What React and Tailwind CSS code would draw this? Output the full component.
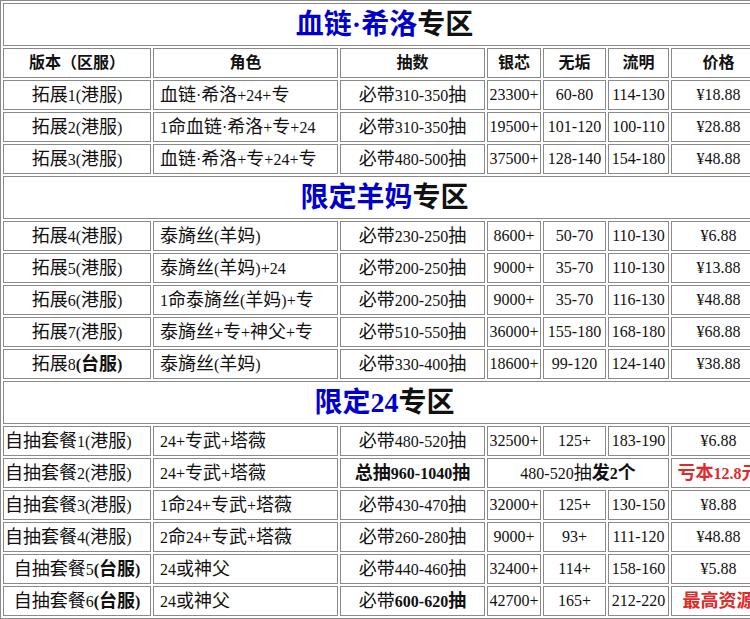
import React from 'react';

const FONT = '"Liberation Serif", "Noto Sans CJK SC", serif';

// CJK runs render a touch larger than the Latin digits in the reference
function cjk(str) {
  const parts = str.split(/([\u3000-\u9fff\uff00-\uffef]+)/);
  return parts.map((p, i) =>
    /[\u3000-\u9fff\uff00-\uffef]/.test(p)
      ? <span key={i} className="text-[18px]">{p}</span>
      : <React.Fragment key={i}>{p}</React.Fragment>
  );
}

const sec1 = [
  ['拓展1(港服)', '血链·希洛+24+专', '必带310-350抽', '23300+', '60-80', '114-130', '¥18.88'],
  ['拓展2(港服)', '1命血链·希洛+专+24', '必带310-350抽', '19500+', '101-120', '100-110', '¥28.88'],
  ['拓展3(港服)', '血链·希洛+专+24+专', '必带480-500抽', '37500+', '128-140', '154-180', '¥48.88'],
];

const sec2 = [
  ['拓展4(港服)', '泰旖丝(羊妈)', '必带230-250抽', '8600+', '50-70', '110-130', '¥6.88'],
  ['拓展5(港服)', '泰旖丝(羊妈)+24', '必带200-250抽', '9000+', '35-70', '110-130', '¥13.88'],
  ['拓展6(港服)', '1命泰旖丝(羊妈)+专', '必带200-250抽', '9000+', '35-70', '116-130', '¥48.88'],
  ['拓展7(港服)', '泰旖丝+专+神父+专', '必带510-550抽', '36000+', '155-180', '168-180', '¥68.88'],
];

const td = 'h-[30px] p-0 border border-[#8a8a8a] text-center align-middle whitespace-nowrap';
const tdL = 'h-[30px] p-0 pl-[6px] border border-[#8a8a8a] text-left align-middle whitespace-nowrap';
const tdL1 = 'h-[30px] p-0 pl-[1px] border border-[#8a8a8a] text-left align-middle whitespace-nowrap';

function Title({ blue }) {
  return (
    <tr>
      <td colSpan={7} className="h-[43px] p-0 border border-[#8a8a8a] text-center align-middle whitespace-nowrap text-[28px] font-bold leading-none">
        <span className="text-[#0000cd]">{blue}</span>
        <span>专区</span>
      </td>
    </tr>
  );
}

function Row({ r, first }) {
  return (
    <tr>
      <td className={td}>{first || cjk(r[0])}</td>
      <td className={tdL}>{cjk(r[1])}</td>
      <td className={td}>{cjk(r[2])}</td>
      <td className={td}>{r[3]}</td>
      <td className={td}>{r[4]}</td>
      <td className={td}>{r[5]}</td>
      <td className={td}>{r[6]}</td>
    </tr>
  );
}

export default function App() {
  return (
    <div className="w-[750px] h-[619px] overflow-hidden bg-white">
      <table
        className="table-fixed border-separate border-spacing-[2px] border border-[#8a8a8a] text-[16px] text-[#111] leading-none"
        style={{ fontFamily: FONT, width: 769 }}
      >
        <colgroup>
          <col className="w-[148px]" />
          <col className="w-[185px]" />
          <col className="w-[145px]" />
          <col className="w-[54px]" />
          <col className="w-[63px]" />
          <col className="w-[61px]" />
          <col className="w-[95px]" />
        </colgroup>
        <tbody>
          <Title blue="血链·希洛" />
          <tr className="font-bold">
            <td className={td}>版本（区服）</td>
            <td className={td}>角色</td>
            <td className={td}>抽数</td>
            <td className={td}>银芯</td>
            <td className={td}>无垢</td>
            <td className={td}>流明</td>
            <td className={td}>价格</td>
          </tr>
          {sec1.map(r => <Row key={r[0]} r={r} />)}

          <Title blue="限定羊妈" />
          {sec2.map(r => <Row key={r[0]} r={r} />)}
          <Row
            r={['', '泰旖丝(羊妈)', '必带330-400抽', '18600+', '99-120', '124-140', '¥38.88']}
            first={<>{cjk('拓展8')}<b>{cjk('(台服)')}</b></>}
          />

          <Title blue="限定24" />
          <tr>
            <td className={tdL1}>{cjk('自抽套餐1(港服)')}</td>
            <td className={tdL}>{cjk('24+专武+塔薇')}</td>
            <td className={td}>{cjk('必带480-520抽')}</td>
            <td className={td}>32500+</td>
            <td className={td}>125+</td>
            <td className={td}>183-190</td>
            <td className={td}>¥6.88</td>
          </tr>
          <tr>
            <td className={tdL1}>{cjk('自抽套餐2(港服)')}</td>
            <td className={tdL}>{cjk('24+专武+塔薇')}</td>
            <td className={td}><b>{cjk('总抽960-1040抽')}</b></td>
            <td colSpan={3} className={td}>{cjk('480-520抽')}<b>{cjk('发2个')}</b></td>
            <td className={td}><b className="text-[#e02a2a]">{cjk('亏本12.8元')}</b></td>
          </tr>
          <tr>
            <td className={tdL1}>{cjk('自抽套餐3(港服)')}</td>
            <td className={tdL}>{cjk('1命24+专武+塔薇')}</td>
            <td className={td}>{cjk('必带430-470抽')}</td>
            <td className={td}>32000+</td>
            <td className={td}>125+</td>
            <td className={td}>130-150</td>
            <td className={td}>¥8.88</td>
          </tr>
          <tr>
            <td className={tdL1}>{cjk('自抽套餐4(港服)')}</td>
            <td className={tdL}>{cjk('2命24+专武+塔薇')}</td>
            <td className={td}>{cjk('必带260-280抽')}</td>
            <td className={td}>9000+</td>
            <td className={td}>93+</td>
            <td className={td}>111-120</td>
            <td className={td}>¥48.88</td>
          </tr>
          <tr>
            <td className={td}>{cjk('自抽套餐5')}<b>{cjk('(台服)')}</b></td>
            <td className={tdL}>{cjk('24或神父')}</td>
            <td className={td}>{cjk('必带440-460抽')}</td>
            <td className={td}>32400+</td>
            <td className={td}>114+</td>
            <td className={td}>158-160</td>
            <td className={td}>¥5.88</td>
          </tr>
          <tr>
            <td className={td}>{cjk('自抽套餐6')}<b>{cjk('(台服)')}</b></td>
            <td className={tdL}>{cjk('24或神父')}</td>
            <td className={td}>{cjk('必带')}<b>{cjk('600-620抽')}</b></td>
            <td className={td}>42700+</td>
            <td className={td}>165+</td>
            <td className={td}>212-220</td>
            <td className={td}><b className="text-[#e02a2a]">{cjk('最高资源')}</b></td>
          </tr>
        </tbody>
      </table>
    </div>
  );
}
